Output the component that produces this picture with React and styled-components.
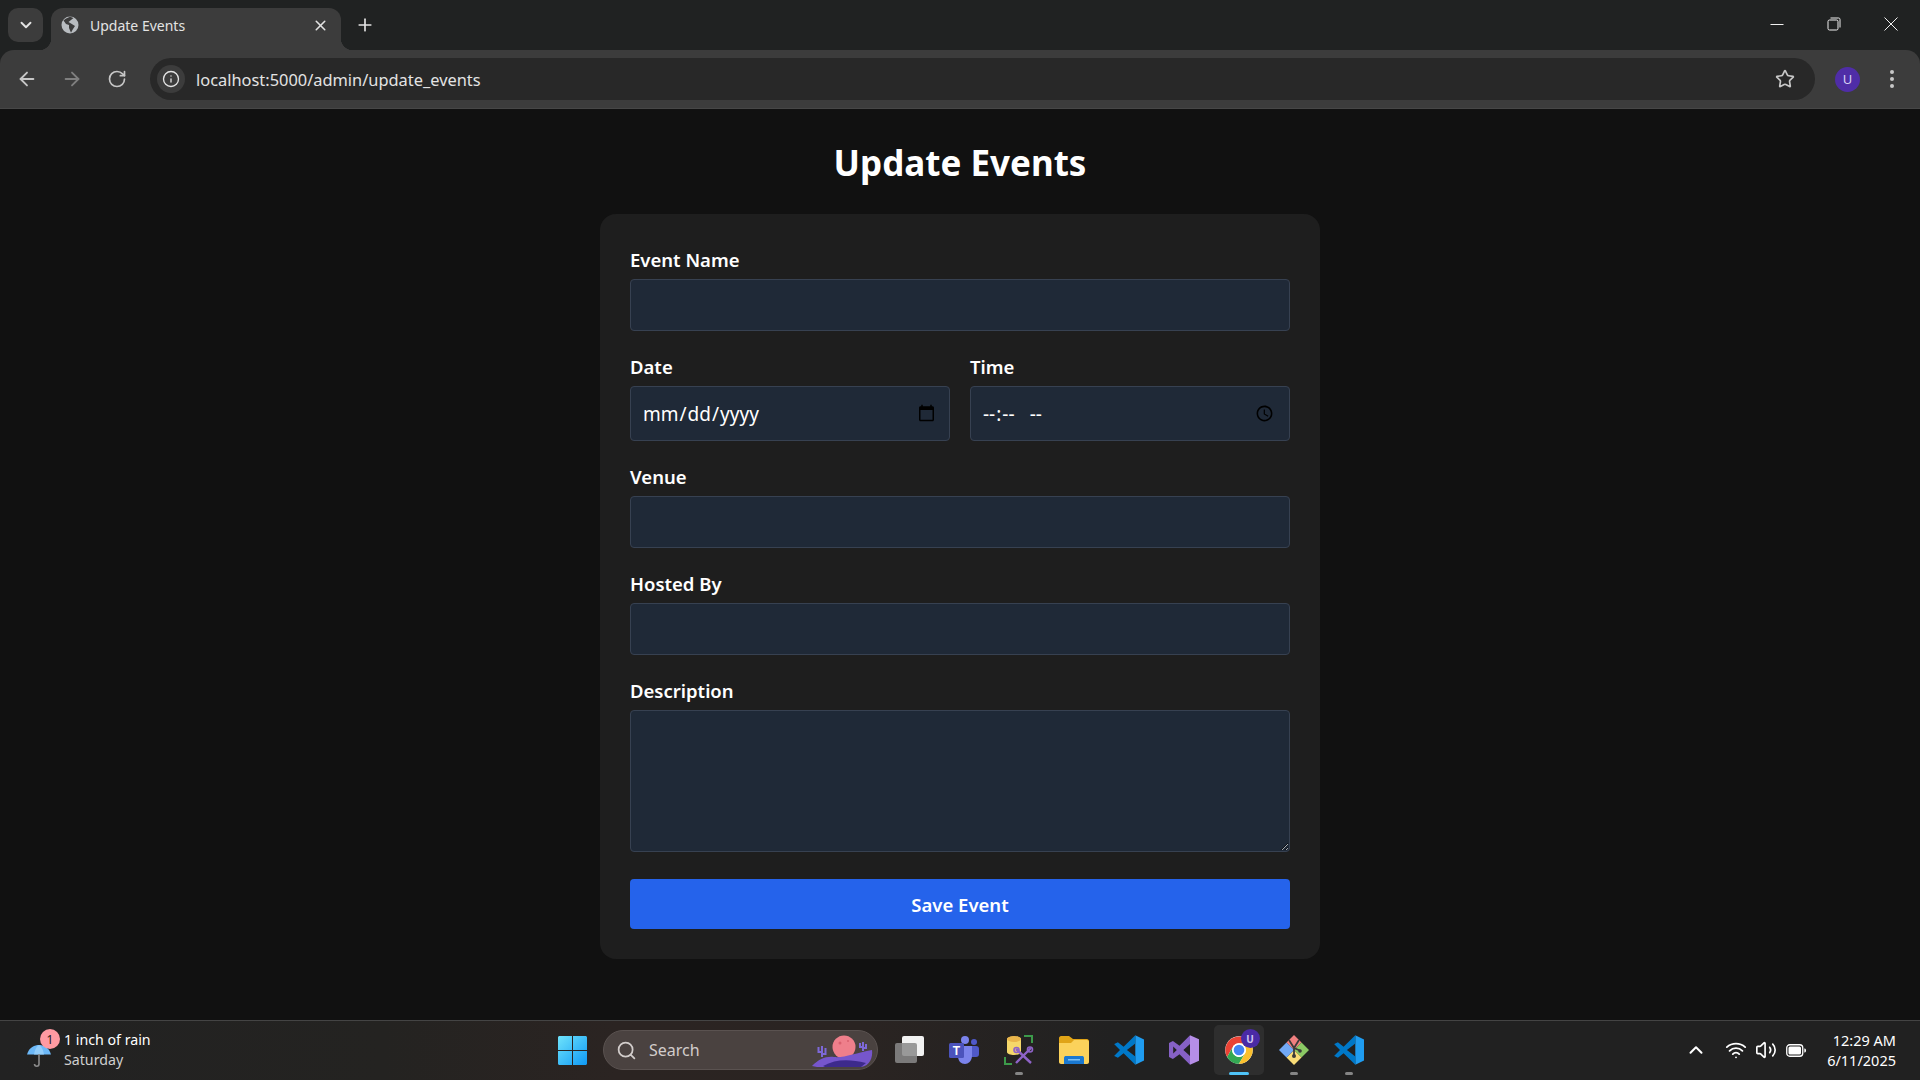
import React from 'react';
import styled, { createGlobalStyle } from 'styled-components';
import { ArrowLeft, ArrowRight, RotateCw, Info, Star, X, Plus, ChevronDown, ChevronUp, Search, Wifi, Volume2 } from 'lucide-react';

const uiFont = '"Noto Sans", "Open Sans", Arial, sans-serif';

const GlobalStyle = createGlobalStyle`
    html, body {
        background: #111111;
        height: 100%;
        margin: 0;
    }
    * {
        box-sizing: border-box;
    }
`;

const Screen = styled.div`
    display: flex;
    flex-direction: column;
    font-family: ${uiFont};
    height: 1080px;
    overflow: hidden;
    width: 1920px;
`;

/* browser chrome */
const BrowserChrome = styled.header`
    background: #202222;
    flex: none;
`;

const TabStrip = styled.div`
    align-items: flex-end;
    display: flex;
    height: 50px;
    padding-left: 8px;
`;

const TabSearchButton = styled.div`
    align-items: center;
    align-self: flex-start;
    background: #3c3c3c;
    border-radius: 10px;
    color: #e3e3e3;
    display: flex;
    height: 34px;
    justify-content: center;
    margin-right: 8px;
    margin-top: 8px;
    width: 35px;
`;

const Tab = styled.div`
    align-items: center;
    background: #3c3c3c;
    border-radius: 12px 12px 0 0;
    color: #e3e3e3;
    display: flex;
    font-size: 14px;
    height: 42px;
    padding: 0 12px 8px 10px;
    position: relative;
    width: 290px;

    &::before, &::after {
        bottom: 0;
        content: '';
        height: 12px;
        position: absolute;
        width: 12px;
    }
    &::before {
        background: radial-gradient(circle at 0 0, transparent 12px, #3c3c3c 12.5px);
        left: -12px;
    }
    &::after {
        background: radial-gradient(circle at 100% 0, transparent 12px, #3c3c3c 12.5px);
        right: -12px;
    }
`;

const TabTitle = styled.span`
    flex: 1;
    margin-left: 11px;
    white-space: nowrap;
`;

const NewTab = styled.div`
    align-self: center;
    color: #e3e3e3;
    display: flex;
    margin-left: 14px;
`;

const WindowControls = styled.div`
    align-items: center;
    align-self: flex-start;
    color: #f0f0f0;
    display: flex;
    gap: 43px;
    height: 48px;
    margin-left: auto;
    padding-right: 22px;
`;

const Toolbar = styled.div`
    align-items: center;
    background: #3c3c3c;
    border-bottom: 1px solid #474747;
    border-radius: 14px 14px 0 0;
    display: flex;
    height: 59px;
    padding: 0 26px 0 16px;
`;

const NavButton = styled.div`
    color: ${({ $dim }) => ($dim ? '#7f7f7f' : '#c7c7c7')};
    display: flex;
    justify-content: center;
    margin-right: 23px;
    width: 22px;
`;

const Omnibox = styled.div`
    align-items: center;
    background: #282828;
    border-radius: 21px;
    color: #e3e3e3;
    display: flex;
    flex: 1;
    font-size: 16.4px;
    height: 42px;
    margin-left: -1px;
    padding: 0 20px 0 7px;
`;

const InfoChip = styled.div`
    align-items: center;
    background: #3c3c3c;
    border-radius: 50%;
    color: #e3e3e3;
    display: flex;
    height: 28px;
    justify-content: center;
    margin-right: 11px;
    width: 28px;
`;

const StarSlot = styled.div`
    color: #c7c7c7;
    display: flex;
    margin-left: auto;
`;

const Avatar = styled.div`
    align-items: center;
    background: #4f2da7;
    border-radius: 50%;
    color: #d9d0f5;
    display: flex;
    font-size: 13px;
    height: 25px;
    justify-content: center;
    margin-left: 20px;
    width: 25px;
`;

const MenuDots = styled.div`
    align-items: center;
    display: flex;
    flex-direction: column;
    gap: 3px;
    margin-left: 30px;

    span {
        background: #c7c7c7;
        border-radius: 50%;
        height: 4px;
        width: 4px;
    }
`;

/* page */
const Page = styled.main`
    align-items: center;
    background: #111111;
    display: flex;
    flex: 1;
    flex-direction: column;
    min-height: 0;
    padding-top: 33px;
`;

const Title = styled.h1`
    color: #ffffff;
    font-size: 35px;
    font-weight: 700;
    line-height: 42px;
    margin: 0 0 30px;
`;

const Card = styled.form`
    background: #1e1e1e;
    border-radius: 16px;
    display: flex;
    flex-direction: column;
    gap: 20px;
    padding: 30px;
    width: 720px;
`;

const Row = styled.div`
    display: grid;
    gap: 20px;
    grid-template-columns: 1fr 1fr;
`;

const Field = styled.div`
    display: flex;
    flex-direction: column;
    min-width: 0;
`;

const Label = styled.label`
    color: #ffffff;
    font-size: 18.5px;
    font-weight: 600;
    line-height: 27px;
    margin-bottom: 6px;
    padding-top: 2px;
`;

const TextInput = styled.input`
    background: #1f2937;
    border: 1px solid #374151;
    border-radius: 4px;
    color: #ffffff;
    display: block;
    font-family: ${uiFont};
    font-size: 19px;
    height: ${({ $tall }) => ($tall ? '55px' : '52px')};
    outline: none;
    padding: 0 11px 0 11px;
    width: 100%;

    &::-webkit-datetime-edit-ampm-field {
        margin-left: 10px;
    }
`;

const TextArea = styled.textarea`
    background: #1f2937;
    border: 1px solid #374151;
    border-radius: 4px;
    color: #ffffff;
    display: block;
    font-family: ${uiFont};
    font-size: 18px;
    height: 142px;
    outline: none;
    padding: 12px;
    width: 100%;
`;

const SaveButton = styled.button`
    background: #2563eb;
    border: none;
    border-radius: 4px;
    color: #ffffff;
    font-family: ${uiFont};
    font-size: 18.5px;
    font-weight: 600;
    height: 50px;
    margin-top: 7px;
    width: 100%;
`;

/* taskbar */
const Taskbar = styled.footer`
    align-items: center;
    background: linear-gradient(90deg, #222222 0%, #242321 20%, #2b2422 32%, #2a2422 45%, #212121 58%, #212121 100%);
    border-top: 1px solid #444444;
    color: #ffffff;
    display: grid;
    flex: none;
    grid-template-columns: 1fr auto 1fr;
    height: 60px;
    padding-bottom: 1px;
`;

const Weather = styled.div`
    align-items: center;
    display: flex;
    padding-left: 26px;
`;

const WeatherIcon = styled.div`
    display: flex;
    margin-right: 12px;
    margin-top: 12px;
    position: relative;
`;

const WeatherBadge = styled.span`
    align-items: center;
    background: #ff9aa2;
    border-radius: 50%;
    color: #1b1b1b;
    display: flex;
    font-size: 12px;
    height: 20px;
    justify-content: center;
    position: absolute;
    right: -8px;
    top: -15px;
    width: 20px;
`;

const TwoLines = styled.div`
    display: flex;
    flex-direction: column;
    font-size: 14.2px;
    line-height: 20px;
    text-align: ${({ $right }) => ($right ? 'right' : 'left')};
`;

const Muted = styled.span`
    color: #cfcfcf;
`;

const Dock = styled.div`
    align-items: center;
    display: flex;
    padding-left: 1px;
`;

const DockItem = styled.div`
    align-items: center;
    background: ${({ $active }) => ($active ? '#2e2e2e' : 'transparent')};
    border-radius: 5px;
    display: flex;
    height: 50px;
    justify-content: center;
    margin: 0 ${({ $active }) => ($active ? '2.5px' : '0')};
    position: relative;
    width: ${({ $active }) => ($active ? '50px' : '55px')};
`;

const RunPill = styled.span`
    background: ${({ $active }) => ($active ? '#4fc3f7' : '#858585')};
    border-radius: 2px;
    bottom: 0;
    height: 3px;
    left: 50%;
    position: absolute;
    transform: translateX(-50%);
    width: ${({ $active }) => ($active ? '20px' : '8px')};
`;

const ChromeBadge = styled.span`
    align-items: center;
    background: #4a2aa5;
    border-radius: 50%;
    color: #cfc4f2;
    display: flex;
    font-size: 10px;
    font-weight: 700;
    height: 19px;
    justify-content: center;
    position: absolute;
    right: 4px;
    top: 4px;
    width: 19px;
`;

const SearchBox = styled.div`
    align-items: center;
    background: #4a4240;
    border: 1px solid #5a5250;
    border-radius: 20px;
    color: #d2cdcb;
    display: flex;
    font-size: 16px;
    height: 40px;
    margin: 0 3px;
    padding: 0 4px 0 12px;
    width: 275px;
`;

const SearchLabel = styled.span`
    flex: 1;
    margin-left: 12px;
`;

const Tray = styled.div`
    align-items: center;
    display: flex;
    justify-content: flex-end;
    padding-right: 24px;
`;

const TrayIcon = styled.div`
    color: #ffffff;
    display: flex;
    justify-content: center;
    margin-right: ${({ $spaced }) => ($spaced ? '10px' : '0')};
    width: 30px;
`;

const Clock = styled(TwoLines)`
    font-size: 14.5px;
    margin-left: 16px;
`;

const GlobeIcon = () => (
    <svg width="18" height="18" viewBox="0 0 18 18">
        <circle cx="9" cy="9" r="8.5" fill="#b8bcc0" />
        <path d="M9 .8 C6 2 4 3 2.5 4.5 L5 8 L8 9 L8 12 L10 16.8 L12 13 L14 10 L10 7.5 L7.5 6 L10 4 L12.5 2 Z" fill="#3c3c3c" />
    </svg>
);

const MinimizeIcon = () => (
    <svg width="14" height="14" viewBox="0 0 14 14"><path d="M0.5 7.5H13.5" stroke="currentColor" /></svg>
);

const RestoreIcon = () => (
    <svg width="14" height="14" viewBox="0 0 14 14" fill="none" stroke="currentColor">
        <rect x="1" y="3" width="10" height="10" rx="1.5" />
        <path d="M3.5 1H11.5C12.5 1 13 1.5 13 2.5V10.5" />
    </svg>
);

const CloseIcon = () => (
    <svg width="14" height="14" viewBox="0 0 14 14" stroke="currentColor"><path d="M.5.5L13.5 13.5M13.5.5L.5 13.5" /></svg>
);

const UmbrellaIcon = () => (
    <svg width="26" height="24" viewBox="0 0 26 24">
        <path d="M1 10.5 C3 3 9 1 13 1 C17 1 23 3 25 10.5 Z" fill="#6cb8f7" />
        <path d="M8 10.5 C9 5 11 2 13 1 C15 2 17 5 18 10.5 Z" fill="#92cdfa" />
        <path d="M13 10 V20 C13 23 8.5 23 8.5 20" fill="none" stroke="#8a8a8a" strokeWidth="1.6" />
    </svg>
);

const WindowsLogo = () => (
    <svg width="29" height="29" viewBox="0 0 29 29">
        <defs>
            <linearGradient id="winGrad" x1="0" y1="0" x2="1" y2="1">
                <stop offset="0" stopColor="#6fe3fb" />
                <stop offset="1" stopColor="#0f99f5" />
            </linearGradient>
        </defs>
        <path d="M0 1.5C0 .7.7 0 1.5 0H14V14H0ZM15 0H27.5C28.3 0 29 .7 29 1.5V14H15ZM0 15H14V29H1.5C.7 29 0 28.3 0 27.5ZM15 15H29V27.5C29 28.3 28.3 29 27.5 29H15Z" fill="url(#winGrad)" />
    </svg>
);

const SearchArt = () => (
    <svg width="62" height="36" viewBox="0 0 62 36">
        <circle cx="33" cy="15" r="11.5" fill="#ef7f8b" />
        <circle cx="29" cy="11" r="1.5" fill="#d9606e" />
        <circle cx="37" cy="9" r="1" fill="#d9606e" />
        <path d="M11 25V14M11 20H7.5V15M11 22H14.5V16M52 19V10M52 15H49V11M52 16H55V12" stroke="#7d68d8" strokeWidth="2" fill="none" />
        <path d="M1 34C8 27 15 24 23 25C33 26 45 21 61 18C62 25 59 34 50 35H6Z" fill="#7656cc" />
        <path d="M12 34C25 27 38 27 55 31L50 35H14Z" fill="#3d2a8c" />
    </svg>
);

const TaskViewIcon = () => (
    <svg width="30" height="30" viewBox="0 0 30 30">
        <rect x="8" y="1" width="22" height="20" rx="2" fill="#f2f2f2" />
        <rect x="1" y="8" width="22" height="20" rx="2" fill="#8a8a8a" fillOpacity="0.85" />
    </svg>
);

const TeamsLogo = () => (
    <svg width="30" height="30" viewBox="0 0 30 30">
        <circle cx="25" cy="7" r="3" fill="#5059c9" />
        <rect x="20" y="11" width="10" height="11" rx="3" fill="#5059c9" />
        <circle cx="16" cy="5" r="4" fill="#7b83eb" />
        <path d="M9 11H23V21C23 26 19 29 16 29C12 29 9 26 9 21Z" fill="#7b83eb" />
        <rect x="0" y="8" width="15" height="15" rx="1.5" fill="#4b53bc" />
        <text x="7.5" y="20" textAnchor="middle" fontFamily="Liberation Sans, sans-serif" fontSize="12" fontWeight="700" fill="#ffffff">T</text>
    </svg>
);

const DbToolsLogo = () => (
    <svg width="30" height="30" viewBox="0 0 30 30">
        <path d="M3 4C3 .5 17 .5 17 4V17C17 21 3 21 3 17Z" fill="#f5d76a" />
        <ellipse cx="10" cy="4" rx="7" ry="3" fill="#e9b54b" />
        <path d="M20 1H28V8M1 22V29H8" fill="none" stroke="#3c9a4a" strokeWidth="2" />
        <path d="M12 28L27 13M12 14L27 28" stroke="#8e63c7" strokeWidth="2.4" />
        <circle cx="12.5" cy="15" r="2.5" fill="none" stroke="#8e63c7" strokeWidth="1.6" />
        <circle cx="26" cy="14.5" r="2.5" fill="none" stroke="#8e63c7" strokeWidth="1.6" />
    </svg>
);

const FolderLogo = () => (
    <svg width="30" height="28" viewBox="0 0 30 28">
        <path d="M0 2C0 1 1 0 2 0H10L14 3H28C29 3 30 4 30 5V8H0Z" fill="#e0a417" />
        <path d="M0 7L12 7L15 4H28C29 4 30 5 30 6V26C30 27 29 28 28 28H2C1 28 0 27 0 26Z" fill="#fbd25b" />
        <path d="M5 28V22C5 20.5 6 20 7 20H23C24 20 25 20.5 25 22V28Z" fill="#1a78d0" />
        <rect x="9" y="23" width="12" height="1.5" fill="#7cc0f5" />
    </svg>
);

const VsCodeLogo = () => (
    <svg width="30" height="30" viewBox="0 0 100 100">
        <path d="M71 1 L100 15 V85 L71 99 Z" fill="#1f9cf0" />
        <path d="M71 1 L32 39 L13 24 L1 30 V31 L20 50 L1 69 V70 L13 76 L32 61 L71 99 V72 L43 50 L71 28 Z" fill="#0078c8" />
    </svg>
);

const VisualStudioLogo = () => (
    <svg width="30" height="30" viewBox="0 0 100 100">
        <path d="M70 1 L100 14 V86 L70 99 Z" fill="#b68ee8" />
        <path fillRule="evenodd" d="M70 1 L35 36 L13 20 L0 27 V73 L13 80 L35 64 L70 99 V70 L48 50 L70 30 Z M14 38 L26 50 L14 62 Z" fill="#8661c5" />
    </svg>
);

const ChromeLogo = () => (
    <svg width="30" height="30" viewBox="0 0 48 48">
        <circle cx="24" cy="24" r="22" fill="#ffffff" />
        <path d="M43.05 13A22 22 0 0 0 4.95 35L14.47 18.5A11 11 0 0 1 24 13Z" fill="#ea4335" />
        <path d="M4.95 35A22 22 0 0 0 24 46L33.53 29.5A11 11 0 0 1 14.47 18.5Z" fill="#34a853" />
        <path d="M24 46A22 22 0 0 0 43.05 13H24A11 11 0 0 1 33.53 29.5Z" fill="#fbc02d" />
        <circle cx="24" cy="24" r="11" fill="#ffffff" />
        <circle cx="24" cy="24" r="8.5" fill="#4285f4" />
    </svg>
);

const GitClientLogo = () => (
    <svg width="30" height="30" viewBox="0 0 30 30">
        <path d="M15 0L22.5 7.5L15 15L7.5 7.5Z" fill="#f07f7f" />
        <path d="M22.5 7.5L30 15L22.5 22.5L15 15Z" fill="#8bc964" />
        <path d="M15 15L22.5 22.5L15 30L7.5 22.5Z" fill="#f9dc77" />
        <path d="M7.5 7.5L15 15L7.5 22.5L0 15Z" fill="#72a9f5" />
        <path d="M10 5L15 13M20 5L15 13V21M15 13L22 16" fill="none" stroke="#3a3a3a" strokeWidth="1.8" />
        <circle cx="15" cy="21" r="2" fill="#3a3a3a" />
        <circle cx="21" cy="16" r="1.8" fill="#3a3a3a" />
    </svg>
);

const BatteryIcon = () => (
    <svg width="20" height="13" viewBox="0 0 20 13">
        <rect x=".75" y=".75" width="16" height="11.5" rx="3" fill="none" stroke="#ffffff" strokeWidth="1.3" />
        <rect x="2.5" y="2.5" width="12.5" height="8" rx="1.5" fill="#ffffff" />
        <path d="M18.3 4.5C19.3 4.5 20 5 20 6.5C20 8 19.3 8.5 18.3 8.5Z" fill="#ffffff" />
    </svg>
);

const dockApps = [
    { key: 'teams', icon: <TeamsLogo /> },
    { key: 'dbtools', icon: <DbToolsLogo />, running: true },
    { key: 'folder', icon: <FolderLogo /> },
    { key: 'vscode', icon: <VsCodeLogo /> },
    { key: 'vs', icon: <VisualStudioLogo /> },
    { key: 'chrome', icon: <ChromeLogo />, active: true, badge: 'U' },
    { key: 'git', icon: <GitClientLogo />, running: true },
    { key: 'vscode2', icon: <VsCodeLogo />, running: true },
];

const App = () => (
    <Screen>
        <GlobalStyle />
        <BrowserChrome>
            <TabStrip>
                <TabSearchButton><ChevronDown size={18} strokeWidth={2.5} /></TabSearchButton>
                <Tab>
                    <GlobeIcon />
                    <TabTitle>Update Events</TabTitle>
                    <X size={17} strokeWidth={2.2} />
                </Tab>
                <NewTab><Plus size={20} strokeWidth={2} /></NewTab>
                <WindowControls>
                    <MinimizeIcon />
                    <RestoreIcon />
                    <CloseIcon />
                </WindowControls>
            </TabStrip>
            <Toolbar>
                <NavButton><ArrowLeft size={22} strokeWidth={2} /></NavButton>
                <NavButton $dim><ArrowRight size={22} strokeWidth={2} /></NavButton>
                <NavButton><RotateCw size={20} strokeWidth={2} /></NavButton>
                <Omnibox>
                    <InfoChip><Info size={18} strokeWidth={1.8} /></InfoChip>
                    localhost:5000/admin/update_events
                    <StarSlot><Star size={20} strokeWidth={2} /></StarSlot>
                </Omnibox>
                <Avatar>U</Avatar>
                <MenuDots><span /><span /><span /></MenuDots>
            </Toolbar>
        </BrowserChrome>

        <Page>
            <Title>Update Events</Title>
            <Card onSubmit={(e) => e.preventDefault()}>
                <Field>
                    <Label htmlFor="name">Event Name</Label>
                    <TextInput id="name" type="text" />
                </Field>
                <Row>
                    <Field>
                        <Label htmlFor="date">Date</Label>
                        <TextInput id="date" type="date" $tall />
                    </Field>
                    <Field>
                        <Label htmlFor="time">Time</Label>
                        <TextInput id="time" type="time" $tall />
                    </Field>
                </Row>
                <Field>
                    <Label htmlFor="venue">Venue</Label>
                    <TextInput id="venue" type="text" />
                </Field>
                <Field>
                    <Label htmlFor="host">Hosted By</Label>
                    <TextInput id="host" type="text" />
                </Field>
                <Field>
                    <Label htmlFor="description">Description</Label>
                    <TextArea id="description" />
                </Field>
                <SaveButton type="submit">Save Event</SaveButton>
            </Card>
        </Page>

        <Taskbar>
            <Weather>
                <WeatherIcon>
                    <UmbrellaIcon />
                    <WeatherBadge>1</WeatherBadge>
                </WeatherIcon>
                <TwoLines>
                    <span>1 inch of rain</span>
                    <Muted>Saturday</Muted>
                </TwoLines>
            </Weather>
            <Dock>
                <DockItem><WindowsLogo /></DockItem>
                <SearchBox>
                    <Search size={21} strokeWidth={2} />
                    <SearchLabel>Search</SearchLabel>
                    <SearchArt />
                </SearchBox>
                <DockItem><TaskViewIcon /></DockItem>
                {dockApps.map((app) => (
                    <DockItem key={app.key} $active={app.active}>
                        {app.icon}
                        {app.badge && <ChromeBadge>{app.badge}</ChromeBadge>}
                        {(app.running || app.active) && <RunPill $active={app.active} />}
                    </DockItem>
                ))}
            </Dock>
            <Tray>
                <TrayIcon $spaced><ChevronUp size={22} strokeWidth={2.2} /></TrayIcon>
                <TrayIcon><Wifi size={22} strokeWidth={2} /></TrayIcon>
                <TrayIcon><Volume2 size={22} strokeWidth={1.8} /></TrayIcon>
                <TrayIcon><BatteryIcon /></TrayIcon>
                <Clock $right>
                    <span>12:29 AM</span>
                    <span>6/11/2025</span>
                </Clock>
            </Tray>
        </Taskbar>
    </Screen>
);

export default App;
